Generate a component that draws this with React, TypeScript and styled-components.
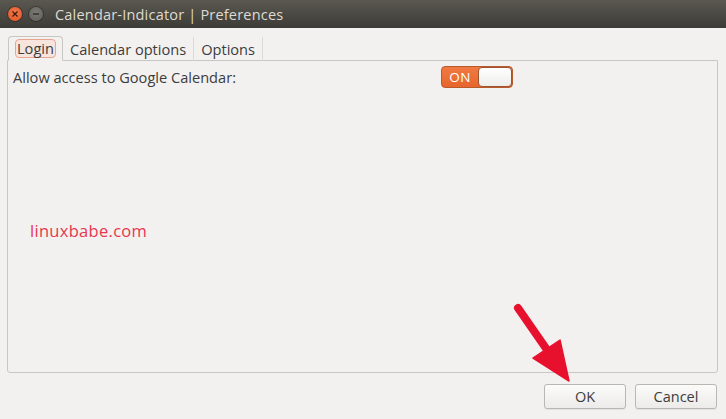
import styled, { createGlobalStyle } from 'styled-components';

const GlobalStyle = createGlobalStyle`
    html, body {
        margin: 0;
        padding: 0;
        background: #f2f1f0;
        font-family: "Open Sans", "DejaVu Sans", sans-serif;
    }
`;

const Window = styled.div`
    position: relative;
    width: 726px;
    height: 419px;
    display: flex;
    flex-direction: column;
    background: #f2f1f0;
    overflow: hidden;
`;

const TitleBar = styled.div`
    height: 28px;
    flex: none;
    display: flex;
    align-items: center;
    padding-left: 8px;
    gap: 7px;
    background: linear-gradient(#5a5850, #3c3b37);
    color: #dfdbd2;
    font-size: 14.5px;
`;

const WinButton = styled.div<{ $kind: 'close' | 'min' }>`
    width: 14px;
    height: 14px;
    border-radius: 50%;
    display: flex;
    align-items: center;
    justify-content: center;
    background: ${p => (p.$kind === 'close'
        ? 'radial-gradient(circle at 50% 40%, #f37a4d, #e0521f)'
        : 'radial-gradient(circle at 50% 40%, #7c7b76, #5d5c57)')};
    box-shadow: 0 0 0 1px rgba(0, 0, 0, 0.25);
`;

const Title = styled.span`
    margin-left: 5px;
    letter-spacing: 0.2px;
`;

const Body = styled.div`
    flex: 1;
    display: flex;
    flex-direction: column;
    padding: 8px 8px 0 7px;
`;

const TabBar = styled.div`
    display: flex;
    height: 25px;
    padding-left: 1px;
    position: relative;
    z-index: 1;
    margin-bottom: -1px;
`;

const Tab = styled.div<{ $active?: boolean }>`
    display: flex;
    align-items: center;
    padding: 0 7px;
    font-size: 14.6px;
    color: #3c3c3c;
    box-sizing: border-box;
    ${p => (p.$active
        ? `
        border: 1px solid #c9c7c2;
        border-bottom: 1px solid #f2f1f0;
        border-radius: 4px 4px 0 0;
        padding: 0 6px;
        background: #f2f1f0;
    `
        : `
        border-right: 1px solid #dcdad5;
        margin-top: 1px;
    `)}
`;

const FocusLabel = styled.span`
    padding: 0 1px;
    line-height: 17px;
    border: 1px solid #eaa58f;
    border-radius: 4px;
    background: #f6e4dd;
`;

const Panel = styled.div`
    height: 313px;
    box-sizing: border-box;
    border: 1px solid #c9c7c2;
    border-radius: 0 0 3px 3px;
    position: relative;
    display: flex;
    flex-direction: column;
`;

const Row = styled.div`
    display: flex;
    align-items: center;
    justify-content: space-between;
    padding: 5px 204px 0 5px;
    height: 22px;
`;

const Label = styled.span`
    font-size: 14.6px;
    color: #3c3c3c;
`;

const Switch = styled.div`
    width: 72px;
    height: 22px;
    box-sizing: border-box;
    display: flex;
    border: 1px solid #b85a2c;
    border-radius: 4px;
    background: linear-gradient(#f07a42, #e6662c);
    overflow: hidden;
`;

const SwitchText = styled.span`
    width: 36px;
    display: flex;
    align-items: center;
    justify-content: center;
    color: #fff;
    font-size: 13.5px;
    letter-spacing: 0.5px;
`;

const Knob = styled.div`
    flex: 1;
    border: 1px solid #9c5432;
    border-radius: 4px;
    background: linear-gradient(#ffffff, #eeedeb);
`;

const Watermark = styled.div`
    margin-top: 131px;
    padding-left: 22px;
    color: #e8364f;
    font-size: 16.5px;
    letter-spacing: 0.3px;
`;

const Footer = styled.div`
    display: flex;
    justify-content: flex-end;
    gap: 9px;
    padding-top: 11px;
    padding-right: 1px;
`;

const Button = styled.div`
    width: 82px;
    height: 25px;
    box-sizing: border-box;
    display: flex;
    align-items: center;
    justify-content: center;
    border: 1px solid #b9b7b2;
    border-radius: 3px;
    background: linear-gradient(#fbfbfa, #ecebe9);
    box-shadow: 0 1px 0 rgba(0, 0, 0, 0.06);
    font-size: 14.5px;
    color: #3c3c3c;
`;

const Arrow = styled.svg`
    position: absolute;
    left: 0;
    top: 0;
    pointer-events: none;
`;

export default function App() {
    return (
        <>
            <GlobalStyle/>
            <Window>
                <TitleBar>
                    <WinButton $kind="close">
                        <svg width="8" height="8" viewBox="0 0 8 8">
                            <path d="M1.5 1.5 L6.5 6.5 M6.5 1.5 L1.5 6.5" stroke="#3b1a0c" strokeWidth="1.3"/>
                        </svg>
                    </WinButton>
                    <WinButton $kind="min">
                        <svg width="8" height="8" viewBox="0 0 8 8">
                            <path d="M1 4 H7" stroke="#2e2d2a" strokeWidth="1.4"/>
                        </svg>
                    </WinButton>
                    <Title>Calendar-Indicator | Preferences</Title>
                </TitleBar>
                <Body>
                    <TabBar>
                        <Tab $active><FocusLabel>Login</FocusLabel></Tab>
                        <Tab>Calendar options</Tab>
                        <Tab>Options</Tab>
                    </TabBar>
                    <Panel>
                        <Row>
                            <Label>Allow access to Google Calendar:</Label>
                            <Switch>
                                <SwitchText>ON</SwitchText>
                                <Knob/>
                            </Switch>
                        </Row>
                        <Watermark>linuxbabe.com</Watermark>
                    </Panel>
                    <Footer>
                        <Button>OK</Button>
                        <Button>Cancel</Button>
                    </Footer>
                </Body>
                <Arrow width="726" height="419" viewBox="0 0 726 419">
                    <path d="M518 308 L552 357" stroke="#e8112d" strokeWidth="8" strokeLinecap="round"/>
                    <path d="M533 358 L560 340 L569 381 Z" fill="#e8112d" stroke="#e8112d" strokeWidth="1.5" strokeLinejoin="round"/>
                </Arrow>
            </Window>
        </>
    );
}
